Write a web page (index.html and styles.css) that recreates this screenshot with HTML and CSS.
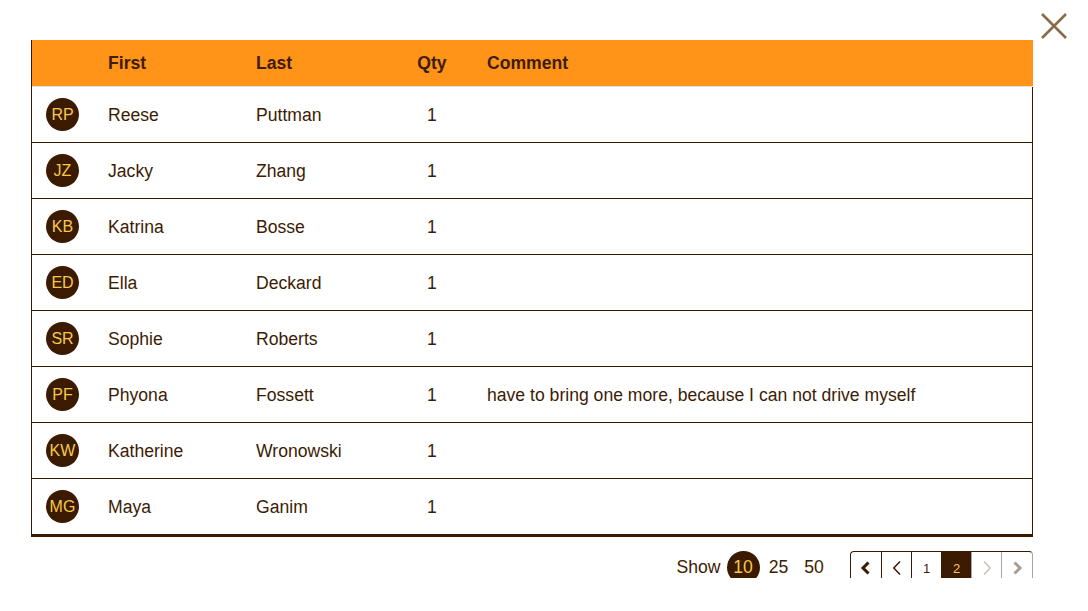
FILE: index.html
```html
<!DOCTYPE html>
<html>
<head>
<meta charset="utf-8">
<link rel="stylesheet" href="styles.css">
</head>
<body>
<div class="modal">
  <button class="close" aria-label="Close">
    <svg width="28" height="28" viewBox="0 0 28 28"><path d="M2 2 L26 26 M26 2 L2 26" stroke="#8c6a47" stroke-width="2.6" fill="none"/></svg>
  </button>
  <div class="table">
    <div class="row head">
      <div class="cell"></div>
      <div class="cell">First</div>
      <div class="cell">Last</div>
      <div class="cell qty">Qty</div>
      <div class="cell">Comment</div>
    </div>
    <div class="row"><div class="cell"><span class="avatar">RP</span></div><div class="cell">Reese</div><div class="cell">Puttman</div><div class="cell qty">1</div><div class="cell"></div></div>
    <div class="row"><div class="cell"><span class="avatar">JZ</span></div><div class="cell">Jacky</div><div class="cell">Zhang</div><div class="cell qty">1</div><div class="cell"></div></div>
    <div class="row"><div class="cell"><span class="avatar">KB</span></div><div class="cell">Katrina</div><div class="cell">Bosse</div><div class="cell qty">1</div><div class="cell"></div></div>
    <div class="row"><div class="cell"><span class="avatar">ED</span></div><div class="cell">Ella</div><div class="cell">Deckard</div><div class="cell qty">1</div><div class="cell"></div></div>
    <div class="row"><div class="cell"><span class="avatar">SR</span></div><div class="cell">Sophie</div><div class="cell">Roberts</div><div class="cell qty">1</div><div class="cell"></div></div>
    <div class="row"><div class="cell"><span class="avatar">PF</span></div><div class="cell">Phyona</div><div class="cell">Fossett</div><div class="cell qty">1</div><div class="cell">have to bring one more, because I can not drive myself</div></div>
    <div class="row"><div class="cell"><span class="avatar">KW</span></div><div class="cell">Katherine</div><div class="cell">Wronowski</div><div class="cell qty">1</div><div class="cell"></div></div>
    <div class="row last"><div class="cell"><span class="avatar">MG</span></div><div class="cell">Maya</div><div class="cell">Ganim</div><div class="cell qty">1</div><div class="cell"></div></div>
  </div>
  <div class="footer">
    <div class="show">
      <span class="show-label">Show</span>
      <span class="size active">10</span>
      <span class="size">25</span>
      <span class="size">50</span>
    </div>
    <div class="pager">
      <span class="pg"><svg width="12" height="14" viewBox="0 0 12 14"><path d="M8.5 1.5 L3 7 L8.5 12.5" stroke="#3b1a02" stroke-width="3" fill="none"/></svg></span>
      <span class="pg"><svg width="12" height="16" viewBox="0 0 12 16"><path d="M9 1.5 L2.8 8 L9 14.5" stroke="#3b1a02" stroke-width="1.5" fill="none"/></svg></span>
      <span class="pg num">1</span>
      <span class="pg num current">2</span>
      <span class="pg dis"><svg width="12" height="16" viewBox="0 0 12 16"><path d="M3 1.5 L9.2 8 L3 14.5" stroke="#c9bfb6" stroke-width="1.5" fill="none"/></svg></span>
      <span class="pg dis"><svg width="12" height="14" viewBox="0 0 12 14"><path d="M3.5 1.5 L9 7 L3.5 12.5" stroke="#a89b90" stroke-width="3" fill="none"/></svg></span>
    </div>
  </div>
</div>
</body>
</html>
```

FILE: styles.css
```css
* { box-sizing: border-box; }
html, body {
  margin: 0;
  padding: 0;
  background: #fff;
}
body {
  font-family: "Liberation Sans", Arial, sans-serif;
  color: #3d1c04;
  width: 1088px;
  height: 611px;
  overflow: hidden;
}
.modal {
  position: relative;
  height: 578px;
  overflow: hidden;
  padding: 40px 55px 0 31px;
}
.close {
  position: absolute;
  top: 12px;
  right: 20px;
  width: 28px;
  height: 28px;
  padding: 0;
  border: 0;
  background: none;
  display: flex;
}
.table {
  width: 1002px;
  border-left: 1px solid #3b1a02;
  border-right: 1px solid #3b1a02;
  border-bottom: 3px solid #3b1a02;
}
.row {
  display: grid;
  grid-template-columns: 61px 148px 151px 80px 1fr;
  height: 56px;
  border-bottom: 1px solid #3b1a02;
  font-size: 17.6px;
  align-items: center;
}
.row.last { border-bottom: 0; height: 55px; }
.row.head {
  height: 47px;
  background: #ff9418;
  font-weight: bold;
  border-bottom: 1px solid #e2e2e2;
  margin-right: -1px;
  padding-bottom: 1px;
}
.cell {
  padding-left: 14px;
  white-space: nowrap;
}
.cell:nth-child(n+2) { padding-left: 15px; padding-top: 1px; }
.cell.qty {
  padding-left: 0;
  text-align: center;
}
.avatar {
  display: flex;
  width: 33px;
  height: 33px;
  border-radius: 50%;
  background: #3b1a02;
  color: #f7c946;
  font-size: 16px;
  align-items: center;
  justify-content: center;
}
.footer {
  display: flex;
  justify-content: flex-end;
  align-items: flex-start;
  width: 1002px;
  margin-top: 14px;
}
.show {
  display: flex;
  align-items: center;
  font-size: 17.6px;
  height: 33px;
}
.show-label { margin-right: 6px; }
.size {
  display: flex;
  align-items: center;
  justify-content: center;
  width: 33px;
  height: 33px;
  border-radius: 50%;
  margin-right: 2.5px;
}
.size.active {
  background: #3b1a02;
  color: #f7c946;
}
.pager {
  display: flex;
  margin-left: 17px;
  border: 1px solid #3b1a02;
  border-right-color: #b0a49a;
  border-radius: 4px 4px 0 0;
  overflow: hidden;
  height: 34px;
}
.pg {
  display: flex;
  align-items: center;
  justify-content: center;
  width: 30px;
  height: 32px;
  font-size: 13px;
  border-left: 1px solid #3b1a02;
}
.pg:first-child { border-left: 0; width: 30px; }
.pg.current {
  background: #3b1a02;
  color: #f7c946;
}
.pg.dis { border-left-color: #b0a49a; }
.pg:last-child { width: 31px; }
```
